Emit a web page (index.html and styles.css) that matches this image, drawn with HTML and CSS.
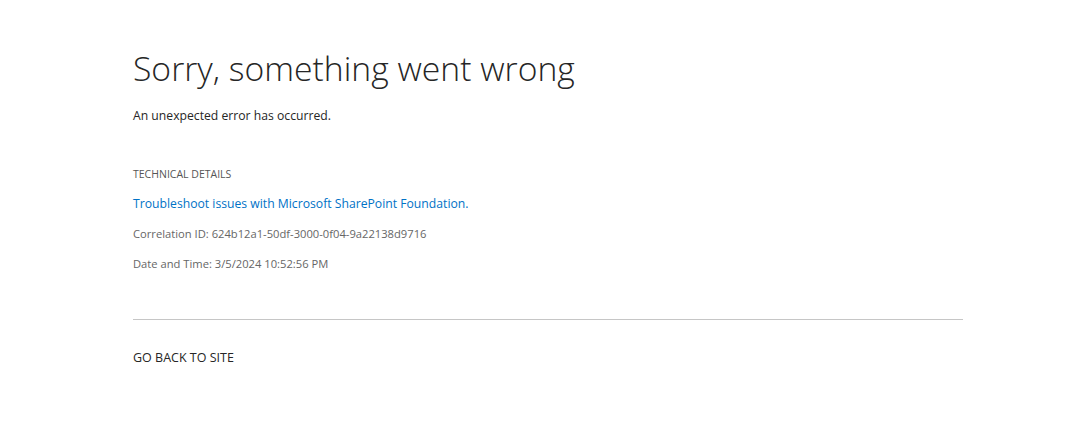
FILE: index.html
```html
<!DOCTYPE html>
<html lang="en">
<head>
<meta charset="utf-8">
<title>Error</title>
<link rel="stylesheet" href="styles.css">
</head>
<body>
<div class="page">
  <h1 class="title">Sorry, something went wrong</h1>
  <p class="message">An unexpected error has occurred.</p>
  <div class="details">
    <div class="details-label">TECHNICAL DETAILS</div>
    <a class="details-link" href="#">Troubleshoot issues with Microsoft SharePoint Foundation.</a>
    <div class="details-row">Correlation ID: 624b12a1-50df-3000-0f04-9a22138d9716</div>
    <div class="details-row">Date and Time: 3/5/2024 10:52:56 PM</div>
  </div>
  <hr class="divider">
  <a class="back" href="#">GO BACK TO SITE</a>
</div>
</body>
</html>
```
FILE: styles.css
```css
html, body {
  margin: 0;
  padding: 0;
  background: #ffffff;
}
body {
  font-family: "Open Sans", "Noto Sans", sans-serif;
  color: #262626;
}
.page {
  width: 830px;
  margin-left: 133px;
  padding-top: 42px;
  display: flex;
  flex-direction: column;
  align-items: flex-start;
}
.title {
  margin: 0;
  font-weight: 300;
  font-size: 33.7px;
  line-height: 52px;
  color: #262626;
}
.message {
  margin: 12px 0 0;
  font-size: 12.2px;
  line-height: 20px;
  color: #262626;
}
.details {
  margin-top: 40px;
  display: flex;
  flex-direction: column;
  align-items: flex-start;
}
.details-label {
  font-size: 10.5px;
  line-height: 16px;
  color: #555;
}
.details-link {
  margin-top: 13px;
  font-size: 12.2px;
  line-height: 18px;
  color: #0072c6;
  text-decoration: none;
}
.details-row {
  margin-top: 12px;
  font-size: 11.2px;
  line-height: 18px;
  color: #666;
}
.divider {
  align-self: stretch;
  margin: 46px 0 0;
  border: 0;
  border-top: 1px solid #c6c6c6;
}
.back {
  margin-top: 29px;
  font-size: 12.5px;
  line-height: 18px;
  color: #262626;
  text-decoration: none;
}
```
